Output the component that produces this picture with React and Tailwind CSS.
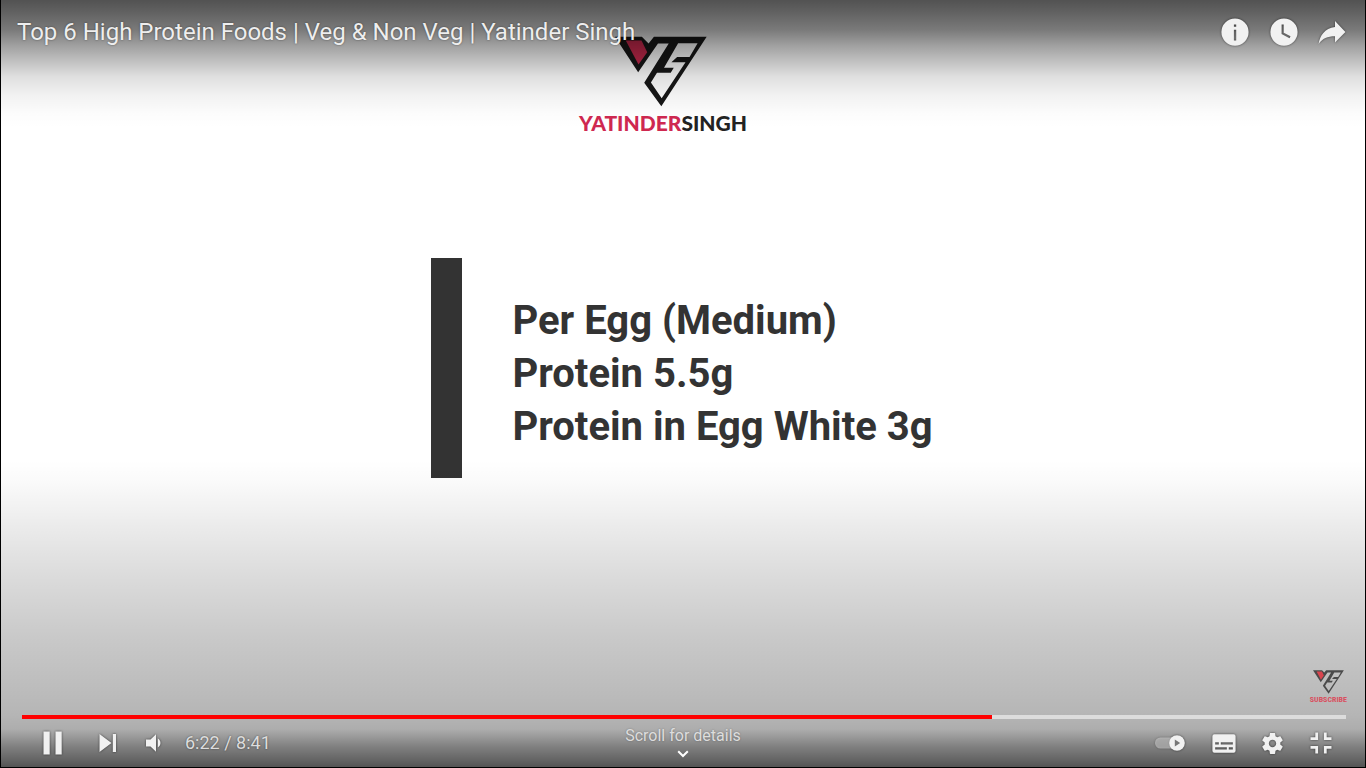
import React from "react";

const shadow = "drop-shadow-[0_0_1px_rgba(0,0,0,0.6)]";

function IconButton({ label, className, children }) {
  return (
    <button type="button" aria-label={label} className={`flex h-12 shrink-0 items-center justify-center ${className}`}>
      {children}
    </button>
  );
}

function BrandMark({ className, dark, accent }) {
  return (
    <svg viewBox="44 36 274 209" className={className} aria-hidden="true">
      <path
        fill={dark}
        fillRule="evenodd"
        d="M44 37H124L144 57L160 37H317L182 244L131 174L204 57H172L113 143ZM232 56H290L266 97H229L212 113H254L183 220L151 173L169 144H210L219 129H190Z"
      />
      <path fill={accent} d="M76 48H123L140 83L114 120Z" />
    </svg>
  );
}

function VideoFrame() {
  return (
    <div className="relative flex h-full flex-col items-center bg-white">
      <div className="flex flex-col items-center pt-9 pr-10">
        <BrandMark className="mr-1 h-[71px] w-[92px]" dark="#171717" accent="#c92a4e" />
        <p className="mt-1 font-['Lato'] text-[21px] leading-6 font-black text-[#222]">
          <span className="text-[#cf2850]">YATINDER</span>SINGH
        </p>
      </div>
      <div className="absolute inset-0 flex items-center justify-center pr-0.5 pb-8">
        <div className="flex items-center gap-[50px]">
          <div className="h-[220px] w-[31px] bg-[#333]" />
          <p className="pt-3 text-[40px] leading-[53px] font-bold text-[#333]">
            Per Egg (Medium)
            <br />
            Protein 5.5g
            <br />
            Protein in Egg White 3g
          </p>
        </div>
      </div>
    </div>
  );
}

function TopBar() {
  return (
    <header className="flex h-16 items-center justify-between pr-[9px] pl-4">
      <h1 className="truncate text-2xl text-[#eee] [text-shadow:0_0_2px_rgba(0,0,0,0.5)]">
        Top 6 High Protein Foods | Veg &amp; Non Veg | Yatinder Singh
      </h1>
      <div className="flex">
        <IconButton label="Info" className="w-12">
          <svg viewBox="0 0 28 28" className={`size-7 ${shadow}`}>
            <path
              fill="#f1f1f1"
              fillRule="evenodd"
              d="M14 .5a13.6 13.6 0 1 0 0 27.2a13.6 13.6 0 1 0 0-27.2ZM12.9 6.5h2.3v2.3h-2.3ZM12.9 11.8h2.3v10.6h-2.3Z"
            />
          </svg>
        </IconButton>
        <IconButton label="Watch later" className="w-[49px]">
          <svg viewBox="0 0 28 28" className={`size-7 ${shadow}`}>
            <path
              fill="#f1f1f1"
              fillRule="evenodd"
              d="M14 .5a13.6 13.6 0 1 0 0 27.2a13.6 13.6 0 1 0 0-27.2ZM11.6 6.5h2.1v8.2l6.8 3.6l-1 1.9l-7.9-4.3Z"
            />
          </svg>
        </IconButton>
        <IconButton label="Share" className="w-12">
          <svg viewBox="0 0 28 24" className={`h-6 w-7 ${shadow}`}>
            <path fill="#f1f1f1" d="M17 1L27.4 12L17 22.5V16.3C9.5 16.3 4.5 18.5 .6 24C2 16 6.5 8.3 17 7.1Z" />
          </svg>
        </IconButton>
      </div>
    </header>
  );
}

function Controls() {
  return (
    <div className="grid h-12 grid-cols-[1fr_auto_1fr]">
      <div className="flex items-center pl-6">
        <IconButton label="Pause" className="w-14">
          <svg viewBox="0 0 20 24" className={`h-6 w-5 ${shadow}`}>
            <path fill="#f1f1f1" d="M.5.5h6.2v23H.5ZM12.5.5h6.2v23h-6.2Z" />
          </svg>
        </IconButton>
        <IconButton label="Next" className="w-[54px]">
          <svg viewBox="0 0 18 18" className={`size-[18px] ${shadow}`}>
            <path fill="#f1f1f1" d="M.5 0L12.5 9L.5 18ZM13.8 0h3.2v18h-3.2Z" />
          </svg>
        </IconButton>
        <IconButton label="Mute" className="w-9">
          <svg viewBox="0 0 15 18" className={`h-[18px] w-[15px] ${shadow}`}>
            <path fill="#f1f1f1" d="M0 5.4h4.5L10 .3v17.4L4.5 12.6H0ZM11.8 4.6C15.4 6.5 15.4 11.5 11.8 13.4Z" />
          </svg>
        </IconButton>
        <span className="ml-[14px] text-lg text-[#ddd] [text-shadow:0_0_2px_rgba(0,0,0,0.5)]">6:22 / 8:41</span>
      </div>
      <button type="button" className="flex flex-col items-center pt-[5px] text-base text-[#ddd]">
        <span className="leading-6 [text-shadow:0_0_2px_rgba(0,0,0,0.3)]">Scroll for details</span>
        <svg viewBox="0 0 12 8" className="mt-0.5 h-2 w-3">
          <path fill="none" stroke="#fff" strokeWidth="2" d="M1.2 1.2L6 6L10.8 1.2" />
        </svg>
      </button>
      <div className="flex items-center justify-end pr-4">
        <IconButton label="Autoplay" className="w-[54px]">
          <svg viewBox="0 0 30 18" className={`h-[18px] w-[30px] ${shadow}`}>
            <rect x="0" y="3.5" width="26" height="11" rx="5.5" fill="#f1f1f1" fillOpacity=".45" />
            <circle cx="22" cy="9" r="7.8" fill="#f1f1f1" />
            <path fill="#777" d="M19.8 5.4L25.2 9L19.8 12.6Z" />
          </svg>
        </IconButton>
        <IconButton label="Subtitles" className="w-[54px]">
          <svg viewBox="0 0 24 19" className={`h-[19px] w-6 ${shadow}`}>
            <path
              fill="#f1f1f1"
              fillRule="evenodd"
              d="M2.4.3h19.2a2 2 0 0 1 2 2v14.4a2 2 0 0 1-2 2H2.4a2 2 0 0 1-2-2V2.3a2 2 0 0 1 2-2ZM3.2 8.3v2.2h3.6V8.3ZM8.8 8.3v2.2h12V8.3ZM3.2 13.2v2.2h11.6v-2.2ZM16.8 13.2v2.2h4v-2.2Z"
            />
          </svg>
        </IconButton>
        <IconButton label="Settings" className="w-[42px]">
          <svg viewBox="10 10 16 16" className={`size-[21px] ${shadow}`}>
            <path
              fill="#f1f1f1"
              fillRule="evenodd"
              d="m23.94 18.78c.03-.25.05-.51.05-.78 0-.27-.02-.52-.05-.78l1.68-1.32c.15-.12.19-.33.09-.51l-1.6-2.76c-.09-.17-.31-.24-.48-.17l-1.99.8c-.41-.32-.86-.58-1.35-.78l-.3-2.12c-.02-.19-.19-.33-.39-.33h-3.2c-.2 0-.36.14-.39.33l-.3 2.12c-.48.2-.93.47-1.35.78l-1.99-.8c-.18-.07-.39 0-.48.17l-1.6 2.76c-.1.17-.05.39.09.51l1.68 1.32c-.03.25-.05.52-.05.78 0 .26.02.52.05.78l-1.68 1.32c-.15.12-.19.33-.09.51l1.6 2.76c.09.17.31.24.48.17l1.99-.8c.41.32.86.58 1.35.78l.3 2.12c.02.19.19.33.39.33h3.2c.2 0 .36-.14.39-.33l.3-2.12c.48-.2.93-.47 1.35-.78l1.99.8c.18.07.39 0 .48-.17l1.6-2.76c.09-.17.05-.39-.09-.51l-1.68-1.32zm-5.94 2.01c-1.54 0-2.8-1.25-2.8-2.8 0-1.54 1.25-2.8 2.8-2.8 1.54 0 2.8 1.25 2.8 2.8 0 1.54-1.25 2.8-2.8 2.8z"
            />
          </svg>
        </IconButton>
        <IconButton label="Exit full screen" className="w-14">
          <svg viewBox="0 0 22 22" className={`size-[22px] ${shadow}`}>
            <path
              fill="#f1f1f1"
              d="M5.3.5h2.8v7.6H.5V5.3h4.8ZM13.9.5h2.8v4.8h4.8v2.8h-7.6ZM.5 13.9h7.6v7.6H5.3v-4.8H.5ZM13.9 13.9h7.6v2.8h-4.8v4.8h-2.8Z"
            />
          </svg>
        </IconButton>
      </div>
    </div>
  );
}

export default function App() {
  return (
    <main className="relative h-screen overflow-hidden bg-black px-px pb-px font-['Roboto',sans-serif]">
      <VideoFrame />
      <div className="absolute inset-x-px top-0 bottom-px flex flex-col justify-between">
        <div className="pointer-events-none absolute inset-x-0 top-0 h-32 bg-[linear-gradient(to_bottom,rgba(0,0,0,0.68)_0px,rgba(0,0,0,0.62)_12px,rgba(0,0,0,0.52)_30px,rgba(0,0,0,0.37)_46px,rgba(0,0,0,0.24)_62px,rgba(0,0,0,0.13)_76px,rgba(0,0,0,0.05)_96px,rgba(0,0,0,0.01)_114px,rgba(0,0,0,0)_128px)]" />
        <div className="pointer-events-none absolute inset-x-0 bottom-0 h-[307px] bg-[linear-gradient(to_top,rgba(0,0,0,0.67)_0px,rgba(0,0,0,0.6)_8px,rgba(0,0,0,0.5)_20px,rgba(0,0,0,0.4)_30px,rgba(0,0,0,0.32)_38px,rgba(0,0,0,0.29)_52px,rgba(0,0,0,0.27)_70px,rgba(0,0,0,0.21)_130px,rgba(0,0,0,0.14)_190px,rgba(0,0,0,0.07)_247px,rgba(0,0,0,0.02)_285px,rgba(0,0,0,0)_307px)]" />
        <div className="relative">
          <TopBar />
        </div>
        <div className="relative flex flex-col">
          <button type="button" aria-label="Subscribe" className="mr-[18px] mb-[10px] flex flex-col items-center self-end">
            <BrandMark className="h-6 w-[31px]" dark="#4a4a4a" accent="#d9454f" />
            <span className="pt-px font-['Roboto_Condensed','Roboto',sans-serif] text-[8px] leading-[10px] font-bold text-[#d9505f]">
              SUBSCRIBE
            </span>
          </button>
          <div className="pr-[19px] pl-[21px]">
            <input
              type="range"
              aria-label="Seek"
              min="0"
              max="521"
              defaultValue="382"
              className="block h-1 w-full appearance-none bg-[linear-gradient(to_right,#f00_73.3%,#dcdcdc_73.3%)] [&::-webkit-slider-thumb]:size-0 [&::-webkit-slider-thumb]:appearance-none"
            />
          </div>
          <Controls />
        </div>
      </div>
    </main>
  );
}
